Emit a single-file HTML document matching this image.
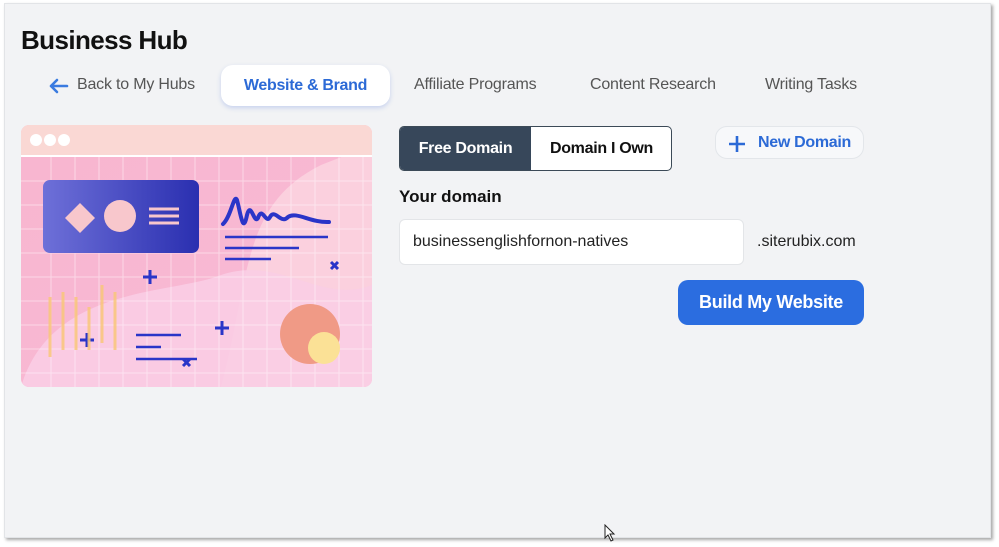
<!DOCTYPE html>
<html><head><meta charset="utf-8"><style>
*{margin:0;padding:0;box-sizing:border-box}
body{width:999px;height:547px;background:#fff;font-family:"Liberation Sans",sans-serif;position:relative;overflow:hidden}
.panel{position:absolute;left:4px;top:3px;width:987px;height:535px;background:#f2f3f5;border:1px solid #e2e4e7;box-shadow:2px 2px 3px rgba(0,0,0,.35)}
.abs{position:absolute;white-space:nowrap}
h1{position:absolute;left:21px;top:25px;font-size:26px;font-weight:bold;color:#111;letter-spacing:-0.6px}
.tab{position:absolute;top:76px;font-size:16px;color:#555;letter-spacing:-0.2px}
.active{position:absolute;left:221px;top:65px;width:169px;height:41px;background:#fff;border-radius:12px;box-shadow:0 2px 5px rgba(70,110,220,.25);color:#2c6ad6;font-weight:bold;font-size:16px;text-align:center;line-height:41px;letter-spacing:-0.3px}
.seg{position:absolute;left:399px;top:126px;width:273px;height:45px;border:1px solid #3c4a57;border-radius:5px;overflow:hidden;background:#fff}
.seg div{position:absolute;top:0;height:45px;line-height:43px;font-size:16px;font-weight:bold;text-align:center;letter-spacing:-0.3px}
.nd{position:absolute;left:715px;top:126px;width:149px;height:33px;border:1px solid #e3e6ea;border-radius:12px;background:#f7f8fa;color:#2c6ad6;font-weight:bold;font-size:16px;line-height:31px;letter-spacing:-0.3px}
.inp{position:absolute;left:399px;top:219px;width:345px;height:46px;background:#fff;border:1px solid #e3e5e8;border-radius:6px;font-size:16px;color:#222;line-height:44px;padding-left:13px}
.btn{position:absolute;left:678px;top:280px;width:186px;height:45px;background:#2b6de0;border-radius:10px;color:#fff;font-weight:bold;font-size:18px;text-align:center;line-height:45px;letter-spacing:-0.3px}
</style></head><body>
<div class="panel"></div>
<h1>Business Hub</h1>
<svg class="abs" style="left:48px;top:77px" width="22" height="18" viewBox="0 0 22 18"><path d="M19 9H3M9 3L3 9l6 6" stroke="#3a7be0" stroke-width="2.6" fill="none" stroke-linecap="round" stroke-linejoin="round"/></svg>
<div class="tab" style="left:77px">Back to My Hubs</div>
<div class="active">Website &amp; Brand</div>
<div class="tab" style="left:414px">Affiliate Programs</div>
<div class="tab" style="left:590px">Content Research</div>
<div class="tab" style="left:765px">Writing Tasks</div>

<svg class="abs" style="left:21px;top:125px" width="351" height="262" viewBox="0 0 351 262">
<defs>
<linearGradient id="bg" x1="0" y1="0" x2="1" y2="1"><stop offset="0" stop-color="#f8b6cf"/><stop offset="1" stop-color="#f9b9d6"/></linearGradient>
<linearGradient id="card" x1="0" y1="0" x2="1" y2="0"><stop offset="0" stop-color="#6e70d8"/><stop offset="1" stop-color="#2a2fb0"/></linearGradient>
<clipPath id="c"><rect width="351" height="262" rx="8"/></clipPath>
</defs>
<g clip-path="url(#c)">
<rect width="351" height="262" fill="url(#bg)"/>
<path d="M200 262 C 230 150 220 80 300 40 L351 20 L351 262Z" fill="#fbd0de"/>
<path d="M0 262 C 30 160 150 170 200 150 C 260 130 300 180 351 160 L351 262Z" fill="#f9cde4" opacity=".9"/>
<rect width="351" height="30" fill="#fad8d4"/>
<line x1="0" y1="31" x2="351" y2="31" stroke="#fff" stroke-width="2"/>
<g stroke="#fff" stroke-width="1" opacity=".45">
<path d="M30 32V262M54 32V262M78 32V262M102 32V262M126 32V262M150 32V262M174 32V262M198 32V262M222 32V262M246 32V262M270 32V262M294 32V262M318 32V262M342 32V262"/>
<path d="M0 56H351M0 80H351M0 104H351M0 128H351M0 152H351M0 176H351M0 200H351M0 224H351M0 248H351"/>
</g>
<circle cx="15" cy="15" r="6" fill="#fff"/><circle cx="29" cy="15" r="6" fill="#fff"/><circle cx="43" cy="15" r="6" fill="#fff"/>
<rect x="22" y="55" width="156" height="73" rx="7" fill="url(#card)"/>
<path d="M59 78L74 93 59 108 44 93Z" fill="#f8c7cc"/>
<circle cx="99" cy="91" r="16" fill="#f8c7cc"/>
<path d="M128 84H158M128 91H158M128 98H158" stroke="#f8c7cc" stroke-width="3"/>
<path d="M202 99C210 92 213 68 216 75C220 90 222 110 226 90C230 75 233 100 237 93C241 80 245 100 249 92C254 83 260 100 267 92C275 86 290 98 308 97" stroke="#2a35c8" stroke-width="4" fill="none" stroke-linecap="round"/>
<path d="M204 112H307M204 123H278M204 134H250M115 210H160M115 222H140M115 234H176" stroke="#2a35c8" stroke-width="2.5"/>
<path d="M129 145v14M122 152h14M66 208v14M59 215h14M201 196v14M194 203h14" stroke="#2a35c8" stroke-width="3"/>
<path d="M310 137l7 7M317 137l-7 7M162 234l7 7M169 234l-7 7" stroke="#2a35c8" stroke-width="3"/>
<g stroke="#f9c77b" stroke-width="3" opacity=".85"><path d="M29 172V232M42 167V225M55 172V225M68 182V225M81 160V218M94 167V225"/></g>
<circle cx="289" cy="209" r="30" fill="#f09a86"/>
<circle cx="303" cy="223" r="16" fill="#fbe196"/>
</g></svg>

<div class="seg"><div style="left:0;width:131px;background:#37475a;color:#fff">Free Domain</div><div style="left:131px;width:141px;color:#111">Domain I Own</div></div>
<div class="nd"><svg class="abs" style="left:12px;top:8px" width="18" height="18" viewBox="0 0 18 18"><path d="M9 1V17M1 9H17" stroke="#2c6ad6" stroke-width="2.6"/></svg><span class="abs" style="left:42px">New Domain</span></div>
<div class="abs" style="left:399px;top:187px;font-size:17px;font-weight:bold;color:#111">Your domain</div>
<div class="inp">businessenglishfornon-natives</div>
<div class="abs" style="left:757px;top:233px;font-size:16px;color:#222">.siterubix.com</div>
<div class="btn">Build My Website</div>
<svg class="abs" style="left:604px;top:524px" width="14" height="18" viewBox="0 0 14 18"><path d="M1 1V14L4 11 7 17 9 16 6 10H10Z" fill="#fff" stroke="#222" stroke-width="1"/></svg>
</body></html>
